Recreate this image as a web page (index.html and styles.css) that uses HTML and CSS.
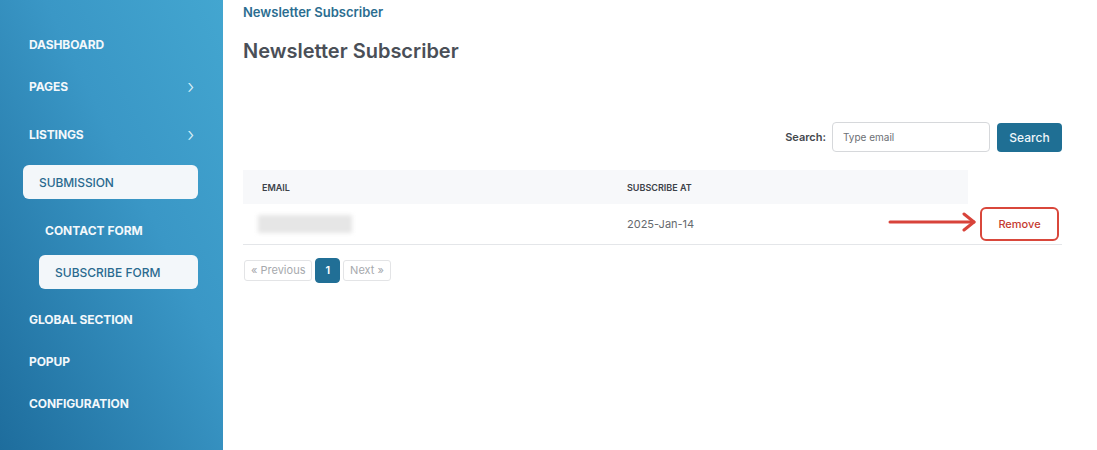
FILE: index.html
```html
<!DOCTYPE html>
<html lang="en">

<head>
    <meta charset="UTF-8">
    <meta name="viewport" content="width=device-width, initial-scale=1.0">
    <title>Newsletter Subscriber</title>
    <link rel="stylesheet" href="styles.css">
</head>

<body>
    <div class="layout">
        <aside class="sidebar">
            <nav class="nav">
                <a class="nav-item">Dashboard</a>
                <a class="nav-item has-sub">Pages <span class="chev">&#8250;</span></a>
                <a class="nav-item has-sub">Listings <span class="chev">&#8250;</span></a>
                <a class="nav-item has-sub open">Submission</a>
                <div class="submenu">
                    <a class="sub-item">Contact Form</a>
                    <a class="sub-item active">Subscribe Form</a>
                </div>
                <a class="nav-item">Global Section</a>
                <a class="nav-item">Popup</a>
                <a class="nav-item">Configuration</a>
            </nav>
        </aside>

        <main class="main">
            <div class="breadcrumb">Newsletter Subscriber</div>
            <h1 class="page-title">Newsletter Subscriber</h1>

            <div class="search-row">
                <label for="search">Search:</label>
                <input type="text" id="search" placeholder="Type email">
                <button class="btn-search">Search</button>
            </div>

            <table class="data-table">
                <thead>
                    <tr>
                        <th class="col-email">Email</th>
                        <th class="col-date">Subscribe At</th>
                        <th class="col-action"></th>
                    </tr>
                </thead>
                <tbody>
                    <tr>
                        <td><div class="blurred"></div></td>
                        <td class="date">2025-Jan-14</td>
                        <td class="action-cell">
                            <svg class="arrow" width="92" height="20" viewBox="0 0 92 20">
                                <line x1="2" y1="10" x2="86" y2="10" stroke="#d8433a" stroke-width="3" stroke-linecap="round"/>
                                <polyline points="76,2 86,10 76,18" fill="none" stroke="#d8433a" stroke-width="3" stroke-linecap="round" stroke-linejoin="round"/>
                            </svg>
                            <button class="btn-remove">Remove</button>
                        </td>
                    </tr>
                </tbody>
            </table>

            <div class="pagination">
                <span class="page-btn disabled">&laquo; Previous</span>
                <span class="page-btn current">1</span>
                <span class="page-btn disabled">Next &raquo;</span>
            </div>
        </main>
    </div>
</body>

</html>
```

FILE: styles.css
```css
* {
    box-sizing: border-box;
}

body {
    margin: 0;
    font-family: Inter, "Open Sans", sans-serif;
    background: #fff;
}

.layout {
    display: flex;
    height: 450px;
}

.sidebar {
    width: 223px;
    flex-shrink: 0;
    background: linear-gradient(to top right, #1e6d9d, #3a97c6 60%, #43a6d0);
}

.nav {
    display: flex;
    flex-direction: column;
    padding-top: 27px;
}

.nav-item {
    display: flex;
    align-items: center;
    justify-content: space-between;
    height: 34px;
    margin: 0 25px 8px 0;
    padding-left: 29px;
    color: #f3f8fb;
    font-size: 12px;
    font-weight: 700;
    text-transform: uppercase;
    letter-spacing: -0.1px;
}

.nav-item.has-sub {
    margin-bottom: 14px;
}

.chev {
    font-size: 19px;
    font-weight: 300;
    color: #d9eef8;
    margin-right: 4px;
}

.nav-item.open {
    margin-left: 23px;
    padding-left: 16px;
    background: #f3f7fa;
    color: #2a6a8f;
    font-weight: 500;
    border-radius: 6px;
}

.submenu {
    display: flex;
    flex-direction: column;
    margin: 0 25px 13px 39px;
}

.sub-item {
    display: flex;
    align-items: center;
    height: 34px;
    margin-bottom: 8px;
    padding-left: 6px;
    color: #f3f8fb;
    font-size: 12px;
    font-weight: 700;
    text-transform: uppercase;
}

.sub-item.active {
    margin-bottom: 0;
    padding-left: 16px;
    background: #f3f7fa;
    color: #2a6a8f;
    font-weight: 500;
    border-radius: 6px;
}

.main {
    flex: 1;
    padding: 4px 35px 0 20px;
}

.breadcrumb {
    color: #2b6d90;
    font-size: 13px;
    font-weight: 600;
    line-height: 17px;
}

.page-title {
    margin: 18px 0 0;
    color: #4a4f57;
    font-size: 20px;
    font-weight: 600;
    line-height: 24px;
}

.search-row {
    display: flex;
    justify-content: flex-end;
    align-items: center;
    gap: 7px;
    margin-top: 59px;
}

.search-row label {
    color: #44484e;
    font-size: 11px;
    font-weight: 600;
    margin-right: -1px;
}

.search-row input {
    width: 158px;
    height: 30px;
    border: 1px solid #d6d8db;
    border-radius: 4px;
    padding: 0 10px;
    font-family: inherit;
    font-size: 10px;
}

.search-row input::placeholder {
    color: #6c6f74;
}

.btn-search {
    width: 65px;
    height: 29px;
    border: none;
    border-radius: 4px;
    background: #1f6f94;
    color: #eef6fa;
    font-family: inherit;
    font-size: 12px;
    font-weight: 500;
}

.data-table {
    width: 100%;
    margin-top: 18px;
    border-collapse: collapse;
}

.data-table th {
    height: 34px;
    padding: 0 19px;
    background: #f7f8fa;
    color: #3c4148;
    font-size: 9px;
    font-weight: 600;
    text-align: left;
    text-transform: uppercase;
}

.data-table th.col-email {
    width: 365px;
}

.data-table th.col-action {
    width: 94px;
    background: #fff;
}

.data-table td {
    height: 40px;
    padding: 0 15px;
    border-bottom: 1px solid #e4e6e9;
    font-size: 11px;
}

.blurred {
    width: 94px;
    height: 18px;
    background: #e6e6e6;
    filter: blur(2px);
}

.date {
    color: #65696e;
    padding-left: 19px !important;
}

.action-cell {
    position: relative;
    padding: 0 3px 0 12px !important;
}

.arrow {
    position: absolute;
    left: -80px;
    top: 8px;
}

.btn-remove {
    width: 79px;
    height: 34px;
    border: 2.5px solid #d9473b;
    border-radius: 6px;
    background: #fff;
    color: #c53a30;
    font-family: inherit;
    font-size: 11px;
    font-weight: 500;
}

.pagination {
    display: flex;
    align-items: center;
    gap: 3px;
    margin-top: 13px;
    margin-left: 1px;
}

.page-btn {
    display: inline-flex;
    align-items: center;
    height: 21px;
    padding: 0 6px;
    border: 1px solid #e3e4e6;
    border-radius: 3px;
    font-size: 11px;
}

.page-btn.disabled {
    color: #a6a9ad;
}

.page-btn.current {
    height: 25px;
    padding: 0 9px;
    border-color: #216f96;
    background: #216f96;
    color: #fff;
    font-weight: 600;
    border-radius: 4px;
}
```
